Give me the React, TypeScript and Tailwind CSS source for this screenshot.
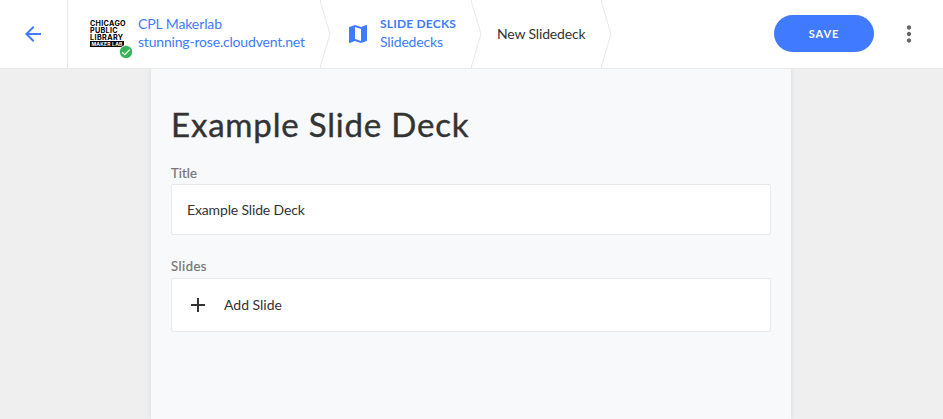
import { MdAdd, MdArrowBack, MdMap, MdMoreVert } from "react-icons/md";

function Chevron() {
  return (
    <svg className="h-[68px] w-[11px] shrink-0" viewBox="0 0 11 68" fill="none">
      <path d="M.5 0v2L10 34 .5 66v2" stroke="#e8e8e8" strokeWidth="1" />
    </svg>
  );
}

function SiteLogo() {
  return (
    <div className="relative h-9 w-9 shrink-0 pt-[4px] font-['Inter',sans-serif] text-[7.2px] leading-[7px] font-bold whitespace-nowrap text-black">
      <div className="tracking-[0.3px]">CHICAGO</div>
      <div className="tracking-[0.3px]">PUBLIC</div>
      <div className="tracking-[0.4px]">LIBRARY</div>
      <div className="h-[6px] w-[34px] bg-black text-center text-[5px] leading-[6px] tracking-[0.2px] text-white">
        MAKER LAB
      </div>
      <svg className="absolute top-[29px] left-[29px] size-[14px]" viewBox="0 0 14 14">
        <circle cx="7" cy="7" r="7" fill="#fff" />
        <circle cx="7" cy="7" r="6.2" fill="#35b558" />
        <path d="M3.2 7.2 5.8 9.7 10.7 4.7" fill="none" stroke="#fff" strokeWidth="1.2" />
      </svg>
    </div>
  );
}

function Header() {
  return (
    <header className="relative z-10 flex h-[69px] items-center border-b border-[#e8e8e8] bg-white">
      <button className="flex h-[68px] w-[68px] shrink-0 items-center justify-center border-r border-[#e8e8e8] pr-px text-[#407bff]">
        <MdArrowBack className="size-6" />
      </button>
      <a className="flex h-[68px] w-[252px] shrink-0 items-center pl-[22px] text-[#407bff]">
        <SiteLogo />
        <div className="ml-3 pb-[2px] text-[14px] leading-[18px] whitespace-nowrap">
          <div className="tracking-[-0.1px]">CPL Makerlab</div>
          <div className="tracking-[-0.19px]">stunning-rose.cloudvent.net</div>
        </div>
      </a>
      <Chevron />
      <a className="flex h-[68px] w-[140px] shrink-0 items-center pl-[15px] text-[#407bff]">
        <MdMap className="size-6" />
        <div className="ml-[10px] pb-[2px] whitespace-nowrap">
          <div className="text-[12px] leading-[18px] font-bold tracking-[0.2px]">SLIDE DECKS</div>
          <div className="text-[14px] leading-[18px] tracking-[-0.15px]">Slidedecks</div>
        </div>
      </a>
      <Chevron />
      <div className="w-[119px] shrink-0 pl-[15px] text-[14px] leading-[18px] tracking-[-0.15px] whitespace-nowrap">
        New Slidedeck
      </div>
      <Chevron />
      <button className="mr-[22px] mb-px ml-auto h-[37px] w-[100px] rounded-full bg-[#407bff] pt-px text-[11px] font-bold tracking-[0.9px] text-white">
        SAVE
      </button>
      <button className="mr-[21px] text-[#666]">
        <MdMoreVert className="size-[26px]" />
      </button>
    </header>
  );
}

export default function App() {
  return (
    <div className="flex h-[419px] w-[943px] flex-col overflow-hidden bg-[#efefef] font-['Lato',sans-serif] text-[#333]">
      <Header />
      <main className="ml-[151px] w-[640px] flex-1 bg-[#f8f9fb] px-5 pt-[33px] shadow-[0_0_5px_rgba(0,0,0,0.1)]">
        <h1 className="h-11 text-[33px] leading-[44px] tracking-[0.82px] whitespace-nowrap [-webkit-text-stroke:0.4px_#333]">
          Example Slide Deck
        </h1>
        <label className="mt-[17px] block h-[21px] text-[13px] leading-[20px] tracking-[0.15px] text-[#737373] [-webkit-text-stroke:0.2px_#737373]">
          Title
        </label>
        <div className="flex h-[51px] items-center rounded-[2px] border border-[#e8e9eb] bg-white px-[15px] pb-px text-[14px] tracking-[-0.15px]">
          Example Slide Deck
        </div>
        <label className="mt-[21px] block h-[22px] text-[13px] leading-[20px] tracking-[0.5px] text-[#737373] [-webkit-text-stroke:0.2px_#737373]">
          Slides
        </label>
        <button className="flex h-[54px] w-full items-center rounded-[2px] border border-[#e8e9eb] bg-white pl-[14px] text-[14px]">
          <MdAdd className="size-6" />
          <span className="ml-[14px] pb-[2px]">Add Slide</span>
        </button>
      </main>
    </div>
  );
}
